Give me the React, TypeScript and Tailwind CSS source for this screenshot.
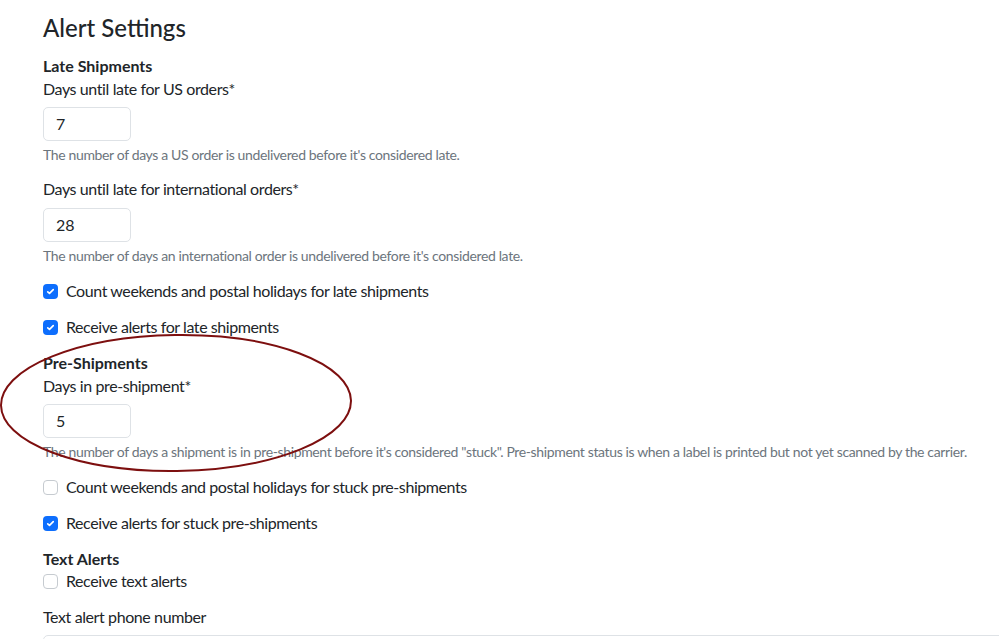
import React from "react";

const font = { fontFamily: "Lato, 'Noto Sans', 'Liberation Sans', sans-serif" };

function NumberInput({ value }: { value: string }) {
	return (
		<div className="mb-[3px] flex h-[34px] w-[88px] items-center rounded-[5px] border border-[#dee2e6] bg-white px-[12px] text-[16px] text-[#212529]">
			{value}
		</div>
	);
}

function Help({ children }: { children: React.ReactNode }) {
	return (
		<div className="h-[21px] whitespace-nowrap text-[14px] leading-[21px] tracking-[-0.36px] text-[#6c757d]">{children}</div>
	);
}

function Check({ checked, label }: { checked: boolean; label: string }) {
	return (
		<div className="flex h-[24px] items-center gap-[8px] text-[16px] tracking-[-0.42px] text-[#212529]">
			{checked ? (
				<span className="flex h-[15px] w-[15px] items-center justify-center rounded-[4px] bg-[#0d6efd]">
					<svg width="11" height="11" viewBox="0 0 20 20" fill="none">
						<path d="M5 10.5l3.2 3L15 6.5" stroke="#fff" strokeWidth="3" strokeLinecap="round" strokeLinejoin="round" />
					</svg>
				</span>
			) : (
				<span className="h-[15px] w-[15px] rounded-[4px] border border-[#c6cbd0] bg-white" />
			)}
			<span>{label}</span>
		</div>
	);
}

function Heading({ children }: { children: React.ReactNode }) {
	return <div className="h-[22px] text-[16px] font-bold leading-[22px] text-[#212529]">{children}</div>;
}

function Label({ children }: { children: React.ReactNode }) {
	return (
		<div className="mb-[6px] h-[24px] text-[16px] leading-[24px] tracking-[-0.4px] text-[#212529]">{children}</div>
	);
}

export default function App() {
	return (
		<div className="relative h-[639px] w-full overflow-hidden bg-white" style={font}>
			<div className="flex flex-col pl-[43px] pt-[13px]">
				<h1 className="mb-[13px] h-[29px] text-[24px] font-medium leading-[29px] text-[#212529]">Alert Settings</h1>

				<Heading>Late Shipments</Heading>
				<Label>Days until late for US orders*</Label>
				<NumberInput value="7" />
				<Help>The number of days a US order is undelivered before it's considered late.</Help>

				<div className="mt-[12px]">
					<Label>Days until late for international orders*</Label>
				</div>
				<div className="mt-[1px]">
					<NumberInput value="28" />
				</div>
				<Help>The number of days an international order is undelivered before it's considered late.</Help>

				<div className="mt-[13px] flex flex-col gap-[12px]">
					<Check checked label="Count weekends and postal holidays for late shipments" />
					<Check checked label="Receive alerts for late shipments" />
				</div>

				<div className="mt-[13px]">
					<Heading>Pre-Shipments</Heading>
				</div>
				<Label>Days in pre-shipment*</Label>
				<NumberInput value="5" />
				<Help>
					The number of days a shipment is in pre-shipment before it's considered "stuck". Pre-shipment status is when a
					label is printed but not yet scanned by the carrier.
				</Help>

				<div className="mt-[13px] flex flex-col gap-[12px]">
					<Check checked={false} label="Count weekends and postal holidays for stuck pre-shipments" />
					<Check checked label="Receive alerts for stuck pre-shipments" />
				</div>

				<div className="mt-[13px]">
					<Heading>Text Alerts</Heading>
				</div>
				<div className="-mt-[1px]">
					<Check checked={false} label="Receive text alerts" />
				</div>

				<div className="mt-[12px]">
					<Label>Text alert phone number</Label>
				</div>
				<div className="h-[34px] w-[1100px] rounded-[5px] border border-[#dee2e6] bg-white" />
			</div>

			<svg className="pointer-events-none absolute left-0 top-[332px]" width="356" height="144" viewBox="0 0 356 144">
				<ellipse cx="176" cy="71" rx="175" ry="68" fill="none" stroke="#7d0f0f" strokeWidth="2" transform="rotate(-0.8 176 71)" />
			</svg>
		</div>
	);
}
